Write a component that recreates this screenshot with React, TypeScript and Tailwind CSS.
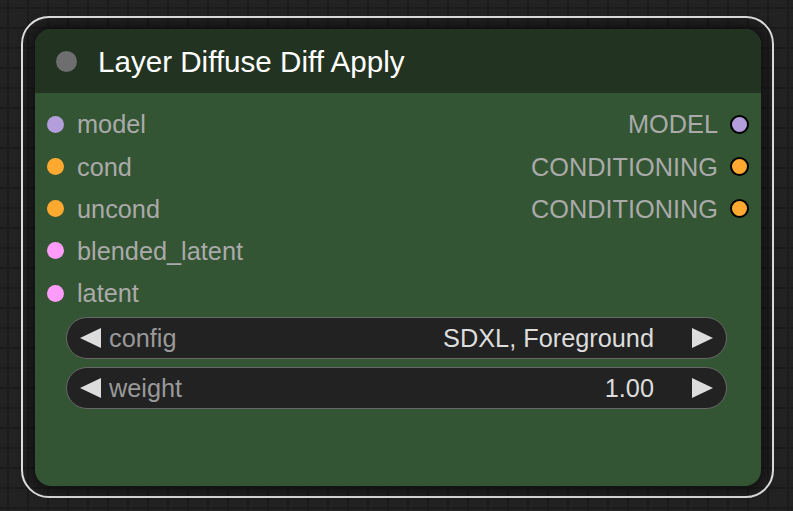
import React from "react";

type Slot = { name: string; color: string };

const inputs: Slot[] = [
  { name: "model", color: "bg-[#b39ddb]" },
  { name: "cond", color: "bg-[#ffa931]" },
  { name: "uncond", color: "bg-[#ffa931]" },
  { name: "blended_latent", color: "bg-[#ff9cf9]" },
  { name: "latent", color: "bg-[#ff9cf9]" },
];

const outputs: Slot[] = [
  { name: "MODEL", color: "bg-[#b39ddb]" },
  { name: "CONDITIONING", color: "bg-[#ffa931]" },
  { name: "CONDITIONING", color: "bg-[#ffa931]" },
];

function Widget({ label, value }: { label: string; value: string }) {
  return (
    <div className="flex h-[42px] items-center rounded-full border-[1.5px] border-[#686868] bg-[#222222] pl-[13px] pr-[13px]">
      <svg width="21" height="20" viewBox="0 0 21 20" className="shrink-0">
        <polygon points="0,10 21,0 21,20" fill="#dddddd" />
      </svg>
      <span className="ml-[8px] text-[#999999]">{label}</span>
      <span className="ml-auto mr-[38px] text-[#dddddd]">{value}</span>
      <svg width="21" height="20" viewBox="0 0 21 20" className="shrink-0">
        <polygon points="21,10 0,0 0,20" fill="#dddddd" />
      </svg>
    </div>
  );
}

export default function App() {
  return (
    <div
      className="h-[511px] w-[793px] overflow-hidden bg-[#222222] bg-[linear-gradient(#1b1b1b_2px,transparent_2px),linear-gradient(90deg,#1b1b1b_2px,transparent_2px)] bg-[size:20px_20px] bg-[position:7px_7px] pl-[21px] pt-[16px]"
      style={{ fontFamily: '"Liberation Sans", Arial, sans-serif' }}
    >
      <div className="h-[482px] w-[753px] rounded-[28px] border-2 border-[#e6e6e6] pb-[10px] pl-[12px] pr-[11px] pt-[11px]">
        <div className="flex h-full flex-col overflow-hidden rounded-[16px] bg-[#335533] shadow-[0_0_12px_6px_rgba(0,0,0,0.45)]">
          <div className="flex h-[64px] shrink-0 items-center bg-[#223322] pl-[21px] pt-[2px]">
            <div className="-mt-[2px] h-[21px] w-[21px] rounded-full bg-[#6e6e6e]" />
            <span className="ml-[21px] text-[29.6px] text-white">Layer Diffuse Diff Apply</span>
          </div>
          <div className="flex flex-col pt-[10px] text-[25.3px] leading-none">
            <div className="flex">
              <div className="flex flex-col">
                {inputs.map((s) => (
                  <div key={s.name} className="flex h-[42.25px] items-center pl-[12px] pt-[2px]">
                    <div className={`-mt-[2px] h-[17px] w-[17px] rounded-full ${s.color}`} />
                    <span className="ml-[13px] text-[#aaaaaa]">{s.name}</span>
                  </div>
                ))}
              </div>
              <div className="ml-auto flex flex-col">
                {outputs.map((s, i) => (
                  <div key={i} className="flex h-[42.25px] items-center justify-end pr-[12px] pt-[2px]">
                    <span className="text-[#aaaaaa]">{s.name}</span>
                    <div className={`-mt-[2px] ml-[12px] h-[19px] w-[19px] rounded-full border-2 border-black ${s.color}`} />
                  </div>
                ))}
              </div>
            </div>
            <div className="ml-[31px] mr-[34px] mt-[3px] flex flex-col gap-[8px]">
              <Widget label="config" value="SDXL, Foreground" />
              <Widget label="weight" value="1.00" />
            </div>
          </div>
        </div>
      </div>
    </div>
  );
}
